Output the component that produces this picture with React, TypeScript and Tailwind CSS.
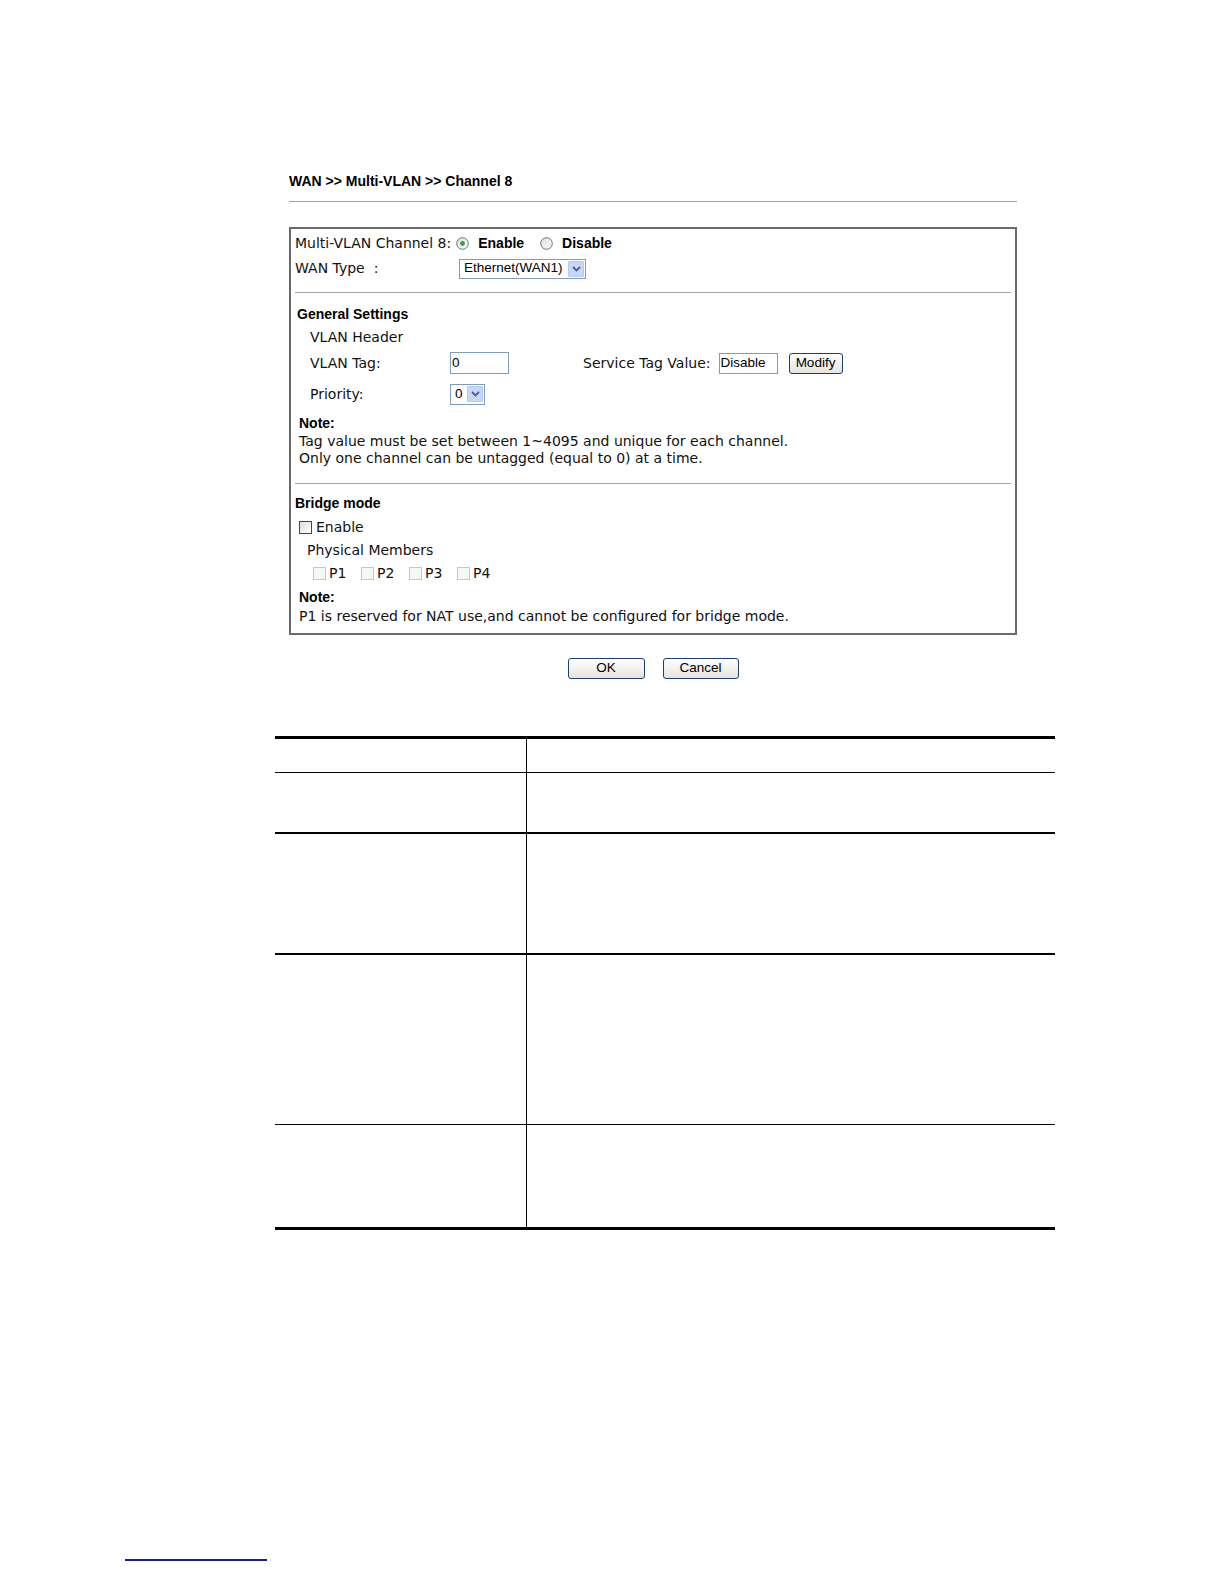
import React from "react";

const body = { fontFamily: '"DejaVu Sans", Verdana, sans-serif' } as const;
const arial = { fontFamily: '"Liberation Sans", Arial, sans-serif' } as const;

function Radio({ checked }: { checked?: boolean }) {
  return (
    <svg width="13" height="13" viewBox="0 0 13 13" className="shrink-0">
      <defs>
        <linearGradient id={checked ? "rg1" : "rg2"} x1="0" y1="0" x2="1" y2="1">
          <stop offset="0" stopColor="#dcdcd7" />
          <stop offset="1" stopColor="#ffffff" />
        </linearGradient>
      </defs>
      <circle cx="6.5" cy="6.5" r="5.8" fill={`url(#${checked ? "rg1" : "rg2"})`} stroke="#587793" strokeWidth="1" />
      {checked && <circle cx="6.5" cy="6.5" r="2.4" fill="#2fa53a" />}
    </svg>
  );
}

function Check({ disabled }: { disabled?: boolean }) {
  return disabled ? (
    <span className="inline-block w-[13px] h-[13px] border border-[#cac8bb] bg-[#f7f7f4] shrink-0" />
  ) : (
    <span className="inline-block w-[13px] h-[13px] border border-[#1c5180] bg-gradient-to-br from-[#dcdcd7] to-white shrink-0" />
  );
}

function Arrow() {
  return (
    <span className="w-[16px] h-[16px] bg-[#c7d7fb] border border-[#b6c8f2] flex items-center justify-center shrink-0 rounded-[1px]">
      <svg width="9" height="6" viewBox="0 0 9 6">
        <path d="M1 1 L4.5 4.5 L8 1" fill="none" stroke="#4d6185" strokeWidth="1.8" />
      </svg>
    </span>
  );
}

function XPButton({ label, w }: { label: string; w: string }) {
  return (
    <div
      className={`${w} h-[21px] border border-[#1d3f6d] rounded-[3px] bg-gradient-to-b from-white to-[#e6e4dc] flex items-center justify-center text-[13.5px] text-black`}
      style={arial}
    >
      {label}
    </div>
  );
}

export default function App() {
  return (
    <div className="w-[1224px] h-[1584px] bg-white flex flex-col text-black overflow-hidden">
      {/* title */}
      <div className="ml-[289px] w-[728px] mt-[173px] h-[16px] leading-[16px] text-[14px] font-bold" style={arial}>
        WAN &gt;&gt; Multi-VLAN &gt;&gt; Channel 8
      </div>
      <div className="ml-[289px] w-[728px] mt-[12px] h-[1px] bg-[#a3a3a3]" />

      {/* main box */}
      <div className="ml-[289px] w-[728px] mt-[25px] h-[408px] border-2 border-[#6a6a6a] flex flex-col text-[14px] text-[#111]" style={body}>
        <div className="mt-[2px] h-[25px] flex items-center pl-[4px]">
          <span>Multi-VLAN Channel 8:</span>
          <span className="ml-[5px]"><Radio checked /></span>
          <span className="ml-[9px] font-bold text-[14px] text-black" style={arial}>Enable</span>
          <span className="ml-[16px]"><Radio /></span>
          <span className="ml-[9px] font-bold text-[14px] text-black" style={arial}>Disable</span>
        </div>
        <div className="h-[25px] flex items-center pl-[4px]">
          <span className="w-[164px]">WAN Type&nbsp;&nbsp;:</span>
          <div className="w-[127px] h-[20px] border border-[#7f9db9] flex items-center justify-between pl-[4px] pr-[1px] bg-white">
            <span className="text-[13.5px] text-black" style={arial}>Ethernet(WAN1)</span>
            <Arrow />
          </div>
        </div>
        <div className="mt-[11px] mx-[4px] h-[1px] bg-[#a0a0a0]" />

        {/* General settings */}
        <div className="mt-[12px] h-[18px] flex items-center pl-[6px] font-bold text-[14px] text-black" style={arial}>
          General Settings
        </div>
        <div className="mt-[5px] h-[18px] flex items-center pl-[19px]">VLAN Header</div>
        <div className="mt-[4px] h-[26px] flex items-center pl-[19px]">
          <span className="w-[140px]">VLAN Tag:</span>
          <div className="w-[59px] h-[22px] border border-[#7f9db9] flex items-center pl-[1px] text-[13.5px] text-black" style={arial}>0</div>
          <span className="ml-[74px]">Service Tag Value:</span>
          <div className="ml-[8px] w-[59px] h-[21px] border border-[#7f9db9] flex items-center pl-[1px] text-[13.5px] text-black" style={arial}>Disable</div>
          <div className="ml-[11px]"><XPButton label="Modify" w="w-[54px]" /></div>
        </div>
        <div className="mt-[6px] h-[24px] flex items-center pl-[19px]">
          <span className="w-[140px]">Priority:</span>
          <div className="w-[35px] h-[21px] border border-[#7f9db9] flex items-center justify-between pl-[4px] pr-[1px]">
            <span className="text-[13.5px] text-black" style={arial}>0</span>
            <Arrow />
          </div>
        </div>
        <div className="mt-[8px] h-[18px] flex items-center pl-[8px] font-bold text-[14px] text-black" style={arial}>Note:</div>
        <div className="mt-[1px] pl-[8px] leading-[17px]">
          <div className="h-[17px]">Tag value must be set between 1~4095 and unique for each channel.</div>
          <div className="h-[17px]">Only one channel can be untagged (equal to 0) at a time.</div>
        </div>
        <div className="mt-[16px] mx-[4px] h-[1px] bg-[#a0a0a0]" />

        {/* Bridge mode */}
        <div className="mt-[10px] h-[18px] flex items-center pl-[4px] font-bold text-[14px] text-black" style={arial}>
          Bridge mode
        </div>
        <div className="mt-[5px] h-[20px] flex items-center pl-[8px]">
          <Check />
          <span className="ml-[4px]">Enable</span>
        </div>
        <div className="mt-[4px] h-[18px] flex items-center pl-[16px]">Physical Members</div>
        <div className="mt-[4px] h-[20px] flex items-center pl-[22px]">
          {["P1", "P2", "P3", "P4"].map((p, i) => (
            <div key={p} className={`flex items-center ${i > 0 ? "ml-[13px]" : ""}`}>
              <Check disabled />
              <span className="ml-[3px] w-[19px]">{p}</span>
            </div>
          ))}
        </div>
        <div className="mt-[5px] h-[18px] flex items-center pl-[8px] font-bold text-[14px] text-black" style={arial}>Note:</div>
        <div className="mt-[1px] h-[18px] flex items-center pl-[8px]">
          P1 is reserved for NAT use,and cannot be configured for bridge mode.
        </div>
      </div>

      {/* buttons */}
      <div className="ml-[289px] w-[728px] mt-[23px] flex justify-center gap-[18px]">
        <XPButton label="OK" w="w-[77px]" />
        <XPButton label="Cancel" w="w-[76px]" />
      </div>

      {/* description table */}
      <div className="ml-[275px] w-[780px] mt-[57px] border-t-[3px] border-black flex flex-col">
        <div className="grid grid-cols-[252px_1fr] h-[34px] border-b border-black">
          <div className="border-r border-black" />
          <div />
        </div>
        <div className="grid grid-cols-[252px_1fr] h-[61px] border-b-2 border-black">
          <div className="border-r border-black" />
          <div />
        </div>
        <div className="grid grid-cols-[252px_1fr] h-[121px] border-b-2 border-black">
          <div className="border-r border-black" />
          <div />
        </div>
        <div className="grid grid-cols-[252px_1fr] h-[170px] border-b border-black">
          <div className="border-r border-black" />
          <div />
        </div>
        <div className="grid grid-cols-[252px_1fr] h-[105px] border-b-[3px] border-black">
          <div className="border-r border-black" />
          <div />
        </div>
      </div>

      {/* footer rule */}
      <div className="ml-[125px] w-[142px] mt-[329px] h-[2px] bg-[#1b1b8c]" />
    </div>
  );
}
